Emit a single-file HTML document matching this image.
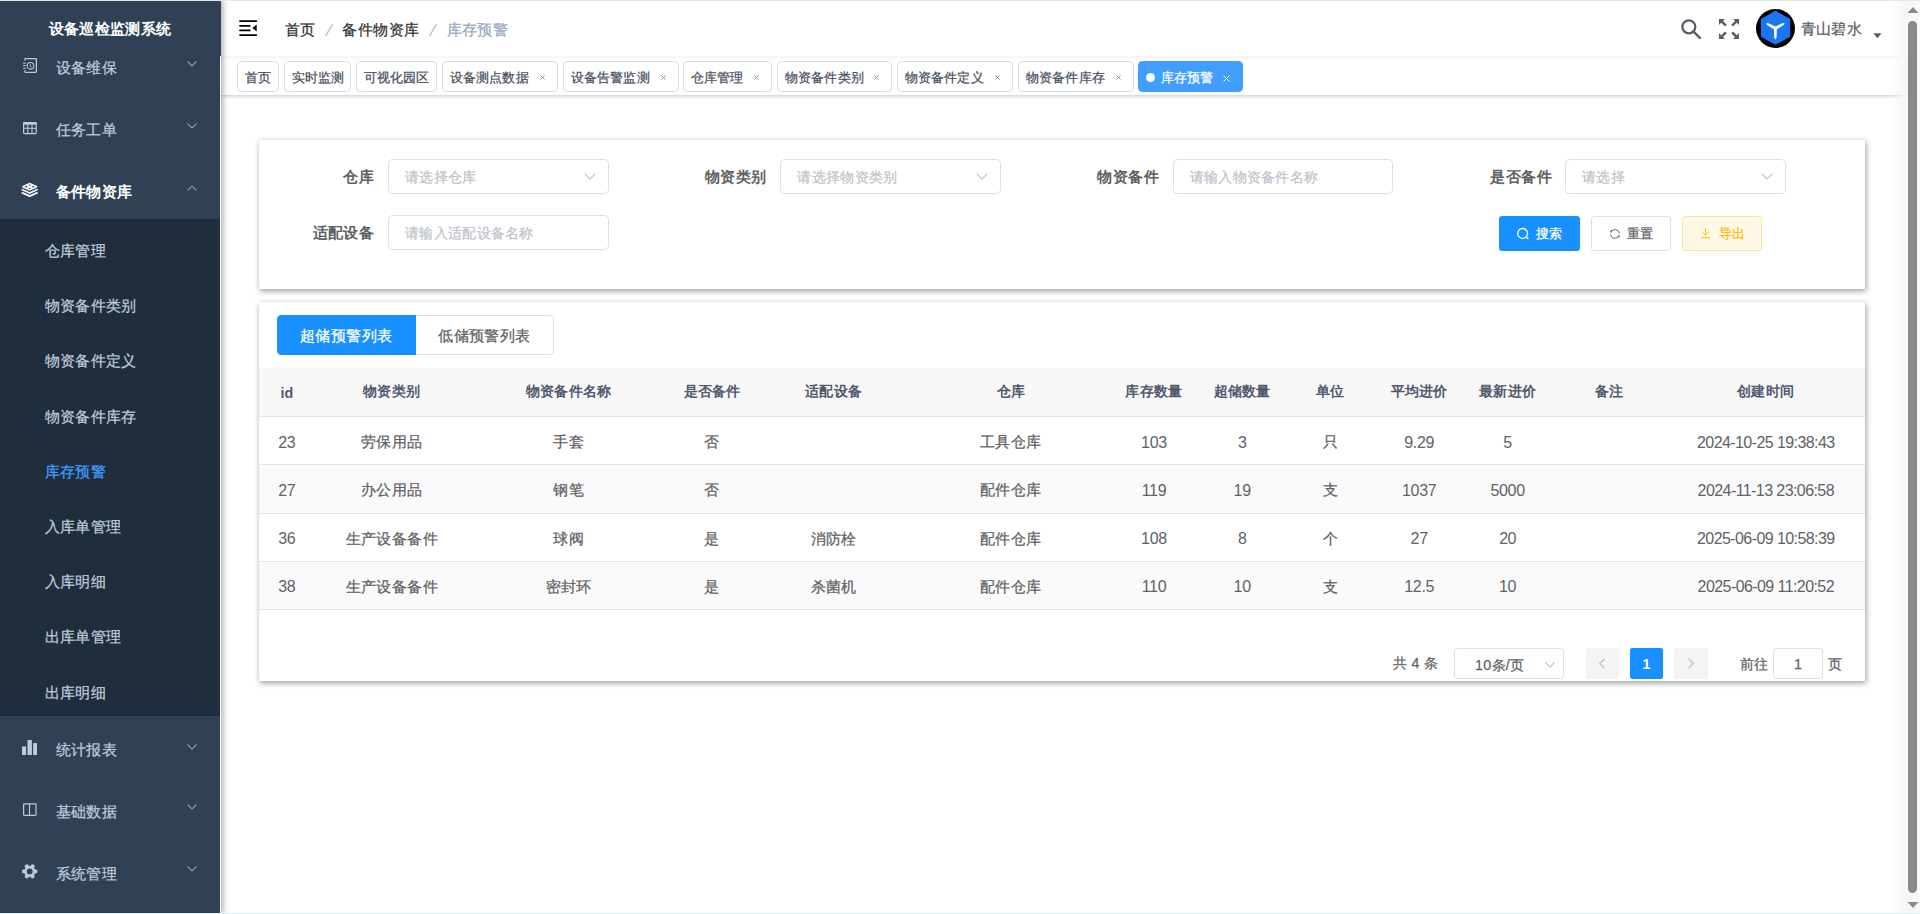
<!DOCTYPE html><html><head><meta charset="utf-8"><style>
*{box-sizing:border-box;margin:0;padding:0}
html,body{width:1920px;height:914px;overflow:hidden;background:#fff;font-family:"Liberation Sans",sans-serif;color:#606266}
.t{position:absolute;white-space:nowrap;line-height:1;-webkit-text-stroke:0.25px}
.a{position:absolute}
.f15{font-size:15.4px;letter-spacing:.4px}
.f14{font-size:14.3px;letter-spacing:.3px}
.f13{font-size:13.2px;letter-spacing:.2px}
#sidebar{position:absolute;left:0;top:0;width:221px;height:914px;background:#304156;overflow:hidden;z-index:5;box-shadow:2px 0 6px rgba(0,21,41,.35)}
.mi{color:#bfcbd9}
#navbar{position:absolute;left:221px;top:0;width:1683px;height:56px;background:#fff;box-shadow:0 1px 4px rgba(0,21,41,.08);z-index:2}
#tags{position:absolute;left:221px;top:56px;width:1683px;height:40px;background:#fff;border-bottom:1px solid #d8dce5;box-shadow:0 1px 3px 0 rgba(0,0,0,.12),0 0 3px 0 rgba(0,0,0,.04);z-index:1}
.tag{position:absolute;top:61.1px;height:30.6px;border:1px solid #d8dce5;border-radius:4.4px;background:#fff;z-index:3}
.card{position:absolute;left:258.5px;width:1606.6px;background:#fff;box-shadow:0.5px 1.5px 6px rgba(0,0,0,.4)}
.lbl{font-weight:bold;color:#606266;-webkit-text-stroke:0}
.inp{position:absolute;width:220.6px;height:34.8px;border:1px solid #dcdfe6;border-radius:4.4px;background:#fff}
.ph{color:#c0c4cc}
.btn{position:absolute;top:215.9px;height:34.7px;border-radius:3.3px}
.hl{position:absolute;left:258.5px;width:1606.6px;height:1px;background:#dfe6ec}
.c{position:absolute;width:300px;text-align:center;white-space:nowrap;line-height:1;-webkit-text-stroke:0.25px}
.bd{color:#606266}
.hd{color:#515a6e;font-weight:bold;-webkit-text-stroke:0}
</style></head><body>
<div id="sidebar">
<div class="a" style="left:0;top:218.8px;width:220px;height:496.9px;background:#1f2d3d"></div>
<div class="a" style="left:220px;top:56px;width:1px;height:858px;background:#fff"></div>
<div class="t f15" style="left:48.5px;top:20.7px;font-weight:bold;color:#fff;letter-spacing:.4px;-webkit-text-stroke:0">设备巡检监测系统</div>
<div class="t f15" style="left:55.5px;top:60.0px;color:#bfcbd9">设备维保</div>
<svg class="a" style="left:186.7px;top:60.5px" width="10" height="6" viewBox="0 0 10 6"><path d="M0.5 0.5 L5 5 L9.5 0.5" fill="none" stroke="#8f9aa8" stroke-width="1.1"/></svg>
<div class="t f15" style="left:55.5px;top:121.7px;color:#bfcbd9">任务工单</div>
<svg class="a" style="left:186.7px;top:122.7px" width="10" height="6" viewBox="0 0 10 6"><path d="M0.5 0.5 L5 5 L9.5 0.5" fill="none" stroke="#8f9aa8" stroke-width="1.1"/></svg>
<div class="t f15" style="left:55.5px;top:183.6px;color:#fff;font-weight:bold;-webkit-text-stroke:0">备件物资库</div>
<svg class="a" style="left:186.7px;top:184.7px" width="10" height="6" viewBox="0 0 10 6"><path d="M0.5 5.5 L5 1 L9.5 5.5" fill="none" stroke="#8f9aa8" stroke-width="1.1"/></svg>
<div class="t f15" style="left:55.5px;top:742.1px;color:#bfcbd9">统计报表</div>
<svg class="a" style="left:186.7px;top:743.5px" width="10" height="6" viewBox="0 0 10 6"><path d="M0.5 0.5 L5 5 L9.5 0.5" fill="none" stroke="#8f9aa8" stroke-width="1.1"/></svg>
<div class="t f15" style="left:55.5px;top:804.1px;color:#bfcbd9">基础数据</div>
<svg class="a" style="left:186.7px;top:804.4px" width="10" height="6" viewBox="0 0 10 6"><path d="M0.5 0.5 L5 5 L9.5 0.5" fill="none" stroke="#8f9aa8" stroke-width="1.1"/></svg>
<div class="t f15" style="left:55.5px;top:866.1px;color:#bfcbd9">系统管理</div>
<svg class="a" style="left:186.7px;top:866.4px" width="10" height="6" viewBox="0 0 10 6"><path d="M0.5 0.5 L5 5 L9.5 0.5" fill="none" stroke="#8f9aa8" stroke-width="1.1"/></svg>
<div class="t f15" style="left:44.5px;top:243.0px;color:#bfcbd9">仓库管理</div>
<div class="t f15" style="left:44.5px;top:298.2px;color:#bfcbd9">物资备件类别</div>
<div class="t f15" style="left:44.5px;top:353.4px;color:#bfcbd9">物资备件定义</div>
<div class="t f15" style="left:44.5px;top:408.6px;color:#bfcbd9">物资备件库存</div>
<div class="t f15" style="left:44.5px;top:463.8px;color:#409eff">库存预警</div>
<div class="t f15" style="left:44.5px;top:519.0px;color:#bfcbd9">入库单管理</div>
<div class="t f15" style="left:44.5px;top:574.2px;color:#bfcbd9">入库明细</div>
<div class="t f15" style="left:44.5px;top:629.4px;color:#bfcbd9">出库单管理</div>
<div class="t f15" style="left:44.5px;top:684.6px;color:#bfcbd9">出库明细</div>
<svg class="a" style="left:22px;top:56px" width="18" height="20" viewBox="0 0 18 20">
<path d="M2.9 4.6 V3.0 Q2.9 2.5 3.4 2.5 H13.9 Q14.4 2.5 14.4 3.0 V15.8 Q14.4 16.3 13.9 16.3 H3.4 Q2.9 16.3 2.9 15.8 V14.2" fill="none" stroke="#bfcbd9" stroke-width="1.25"/>
<path d="M1.1 7.2 H3.9 M1.1 9.6 H3.9 M1.1 12.3 H3.9" stroke="#bfcbd9" stroke-width="1"/>
<circle cx="8.5" cy="9.8" r="3.3" fill="none" stroke="#bfcbd9" stroke-width="1.1"/>
<path d="M8.3 8.2 V10.1 L9.6 11" fill="none" stroke="#bfcbd9" stroke-width="0.9"/>
</svg>
<svg class="a" style="left:22px;top:121px" width="16" height="14" viewBox="0 0 16 14">
<rect x="1.6" y="1.6" width="12.6" height="11" rx="0.8" fill="none" stroke="#bfcbd9" stroke-width="1.2"/>
<rect x="1.2" y="1.1" width="13.4" height="2.6" fill="#bfcbd9"/>
<path d="M1.6 7.3 H14.2 M5.8 3.5 V12.6 M10 3.5 V12.6" stroke="#bfcbd9" stroke-width="1.1"/>
</svg>
<svg class="a" style="left:21px;top:181px" width="18" height="18" viewBox="0 0 18 18">
<path d="M1 5.8 Q1 5.2 1.8 4.8 L8 1.9 Q8.7 1.6 9.4 1.9 L15.6 4.8 Q16.4 5.2 16.4 5.8 Q16.4 6.4 15.6 6.8 L9.4 9.4 Q8.7 9.7 8 9.4 L1.8 6.8 Q1 6.4 1 5.8 Z" fill="#f4f4f5"/>
<path d="M1.4 8.7 L8.7 12 L16 8.7" fill="none" stroke="#f4f4f5" stroke-width="1.8" stroke-linejoin="round" stroke-linecap="round"/>
<path d="M1.4 11.9 L8.7 15.1 L16 11.9" fill="none" stroke="#f4f4f5" stroke-width="1.8" stroke-linejoin="round" stroke-linecap="round"/>
<ellipse cx="5.2" cy="5.8" rx="1.1" ry="0.7" fill="#304156"/><ellipse cx="12.2" cy="5.8" rx="1.1" ry="0.7" fill="#304156"/><ellipse cx="8.7" cy="3.9" rx="0.9" ry="0.5" fill="#304156"/><ellipse cx="8.7" cy="7.6" rx="0.9" ry="0.5" fill="#304156"/>
</svg>
<svg class="a" style="left:21px;top:739px" width="18" height="17" viewBox="0 0 18 17">
<rect x="1" y="7.4" width="4.1" height="8.6" fill="#bfcbd9"/><rect x="6.5" y="1" width="4.4" height="15" fill="#bfcbd9"/><rect x="12.1" y="4.1" width="3.9" height="11.9" fill="#bfcbd9"/>
</svg>
<svg class="a" style="left:22px;top:802px" width="16" height="15" viewBox="0 0 16 15">
<rect x="1.6" y="1.9" width="12.4" height="11.4" rx="0.8" fill="none" stroke="#bfcbd9" stroke-width="1.2"/>
<path d="M7.5 1.9 V13.3" stroke="#bfcbd9" stroke-width="1.2"/>
</svg>
<svg class="a" style="left:22px;top:864px" width="16" height="16" viewBox="0 0 16 16">
<g transform="translate(7.7 7.4)"><circle r="5.6" fill="#bfcbd9"/><rect x="-1.9" y="-7.6" width="3.8" height="3.6" rx="1" transform="rotate(30)" fill="#bfcbd9"/><rect x="-1.9" y="-7.6" width="3.8" height="3.6" rx="1" transform="rotate(90)" fill="#bfcbd9"/><rect x="-1.9" y="-7.6" width="3.8" height="3.6" rx="1" transform="rotate(150)" fill="#bfcbd9"/><rect x="-1.9" y="-7.6" width="3.8" height="3.6" rx="1" transform="rotate(210)" fill="#bfcbd9"/><rect x="-1.9" y="-7.6" width="3.8" height="3.6" rx="1" transform="rotate(270)" fill="#bfcbd9"/><rect x="-1.9" y="-7.6" width="3.8" height="3.6" rx="1" transform="rotate(330)" fill="#bfcbd9"/><circle r="2.9" fill="#304156"/></g>
</svg>
</div>
<div id="navbar"></div>
<div class="a" style="left:0;top:0;width:1920px;height:1px;background:#e6e8e3;z-index:9"></div>
<svg class="a" style="left:238px;top:19px;z-index:3" width="20" height="18" viewBox="0 0 20 18">
<path d="M2 2.2 H18.3 M2 16.1 H18.3 M2 6.8 H11.8 M2 11.4 H11.8" stroke="#000" stroke-width="1.7" stroke-linecap="round"/>
<path d="M18.7 5.5 L14.3 9 L18.7 12.4 Z" fill="#000"/>
</svg>
<div class="t f15" style="left:285px;top:21.7px;color:#303133;z-index:3">首页</div>
<svg class="a" style="left:324px;top:23px;z-index:3" width="10" height="14" viewBox="0 0 10 14"><path d="M1.7 12.8 L8.6 1.1" stroke="#c0c4cc" stroke-width="1.5"/></svg>
<div class="t f15" style="left:342.4px;top:21.7px;color:#303133;z-index:3">备件物资库</div>
<svg class="a" style="left:428px;top:23px;z-index:3" width="10" height="14" viewBox="0 0 10 14"><path d="M1.6 12.8 L8.5 1.1" stroke="#c0c4cc" stroke-width="1.5"/></svg>
<div class="t f15" style="left:446.5px;top:21.7px;color:#97a8be;z-index:3">库存预警</div>
<svg class="a" style="left:1679px;top:17px;z-index:3" width="24" height="24" viewBox="0 0 24 24">
<circle cx="9.8" cy="9.8" r="6.5" fill="none" stroke="#5a5e66" stroke-width="2.3"/>
<path d="M14.6 14.6 L20.8 20.8" stroke="#5a5e66" stroke-width="2.5" stroke-linecap="round"/>
</svg>
<svg class="a" style="left:1718px;top:18px;z-index:3" width="22" height="22" viewBox="0 0 22 22">
<g fill="#5a5e66">
<path d="M1 1 H7 L5 3 L8.8 6.8 L7 8.6 L3.2 4.8 L1 7 Z"/>
<path d="M21 1 H15 L17 3 L13.2 6.8 L15 8.6 L18.8 4.8 L21 7 Z"/>
<path d="M1 21 H7 L5 19 L8.8 15.2 L7 13.4 L3.2 17.2 L1 15 Z"/>
<path d="M21 21 H15 L17 19 L13.2 15.2 L15 13.4 L18.8 17.2 L21 15 Z"/>
</g></svg>
<svg class="a" style="left:1755px;top:8px;z-index:3" width="41" height="41" viewBox="0 0 41 41">
<circle cx="20.5" cy="20.4" r="19.5" fill="#000"/>
<path d="M20.4 2.8 L35.2 11 V28.8 L20.4 36.8 L5.9 28.8 V11 Z" fill="#1b76f5"/>
<path transform="translate(0 0.8)" d="M11.2 14.6 Q12.4 13.9 14 14.6 L20.4 17.6 L26.8 14.6 Q28.4 13.9 29.6 14.6 Q29.2 15.9 27.8 16.8 L21.8 20.6 L21.6 28.6 L20.4 31 L19.2 28.6 L19 20.6 L13 16.8 Q11.6 15.9 11.2 14.6 Z" fill="#fff"/>
</svg>
<div class="t f15" style="left:1800.5px;top:21.3px;color:#5a5e66;z-index:3">青山碧水</div>
<svg class="a" style="left:1873px;top:33px;z-index:3" width="9" height="6" viewBox="0 0 9 6"><path d="M0.3 0.3 H8.5 L4.4 5.3 Z" fill="#5a5e66"/></svg>
<div id="tags"></div>
<div class="tag" style="left:237.3px;width:41.3px"></div>
<div class="t f13" style="left:244.8px;top:70.5px;color:#495060;z-index:4">首页</div>
<div class="tag" style="left:284.2px;width:67.3px"></div>
<div class="t f13" style="left:291.7px;top:70.5px;color:#495060;z-index:4">实时监测</div>
<div class="tag" style="left:356.2px;width:81.3px"></div>
<div class="t f13" style="left:363.7px;top:70.5px;color:#495060;z-index:4">可视化园区</div>
<div class="tag" style="left:442.1px;width:115.7px"></div>
<div class="t f13" style="left:449.6px;top:70.5px;color:#495060;z-index:4">设备测点数据</div>
<svg class="a" style="left:539.7px;top:75.4px;z-index:4" width="5" height="5" viewBox="0 0 5 5"><path d="M0.5 0.5 L4.5 4.5 M4.5 0.5 L0.5 4.5" stroke="#8d9199" stroke-width="1"/></svg>
<div class="tag" style="left:563.2px;width:115.4px"></div>
<div class="t f13" style="left:570.7px;top:70.5px;color:#495060;z-index:4">设备告警监测</div>
<svg class="a" style="left:660.5px;top:75.4px;z-index:4" width="5" height="5" viewBox="0 0 5 5"><path d="M0.5 0.5 L4.5 4.5 M4.5 0.5 L0.5 4.5" stroke="#8d9199" stroke-width="1"/></svg>
<div class="tag" style="left:683.2px;width:89.3px"></div>
<div class="t f13" style="left:690.7px;top:70.5px;color:#495060;z-index:4">仓库管理</div>
<svg class="a" style="left:754.4px;top:75.4px;z-index:4" width="5" height="5" viewBox="0 0 5 5"><path d="M0.5 0.5 L4.5 4.5 M4.5 0.5 L0.5 4.5" stroke="#8d9199" stroke-width="1"/></svg>
<div class="tag" style="left:777.4px;width:114.9px"></div>
<div class="t f13" style="left:784.9px;top:70.5px;color:#495060;z-index:4">物资备件类别</div>
<svg class="a" style="left:874.2px;top:75.4px;z-index:4" width="5" height="5" viewBox="0 0 5 5"><path d="M0.5 0.5 L4.5 4.5 M4.5 0.5 L0.5 4.5" stroke="#8d9199" stroke-width="1"/></svg>
<div class="tag" style="left:897.2px;width:115.4px"></div>
<div class="t f13" style="left:904.7px;top:70.5px;color:#495060;z-index:4">物资备件定义</div>
<svg class="a" style="left:994.5px;top:75.4px;z-index:4" width="5" height="5" viewBox="0 0 5 5"><path d="M0.5 0.5 L4.5 4.5 M4.5 0.5 L0.5 4.5" stroke="#8d9199" stroke-width="1"/></svg>
<div class="tag" style="left:1018.3px;width:115.4px"></div>
<div class="t f13" style="left:1025.8px;top:70.5px;color:#495060;z-index:4">物资备件库存</div>
<svg class="a" style="left:1115.6px;top:75.4px;z-index:4" width="5" height="5" viewBox="0 0 5 5"><path d="M0.5 0.5 L4.5 4.5 M4.5 0.5 L0.5 4.5" stroke="#8d9199" stroke-width="1"/></svg>
<div class="tag" style="left:1138.1px;width:104.7px;background:#409eff;border-color:#409eff"></div>
<div class="a" style="left:1146px;top:73.1px;width:9px;height:9px;border-radius:50%;background:#fff;z-index:4"></div>
<div class="t f13" style="left:1160.5px;top:70.5px;color:#fff;z-index:4">库存预警</div>
<svg class="a" style="left:1223.1px;top:75.1px;z-index:4" width="7" height="7" viewBox="0 0 7 7"><path d="M0.5 0.5 L6.5 6.5 M6.5 0.5 L0.5 6.5" stroke="#fff" stroke-width="1"/></svg>
<div class="card" style="top:139.7px;height:149.2px"></div>
<div class="t f15 lbl" style="right:1546.0px;top:168.9px;letter-spacing:.4px">仓库</div>
<div class="t f15 lbl" style="right:1153.5px;top:168.9px;letter-spacing:.4px">物资类别</div>
<div class="t f15 lbl" style="right:761.0px;top:168.9px;letter-spacing:.4px">物资备件</div>
<div class="t f15 lbl" style="right:368.0px;top:168.9px;letter-spacing:.4px">是否备件</div>
<div class="t f15 lbl" style="right:1545.8px;top:225.2px;letter-spacing:.4px">适配设备</div>
<div class="inp" style="left:388.1px;top:159px"></div>
<div class="t f14 ph" style="left:405.1px;top:169.5px">请选择仓库</div>
<svg class="a" style="left:584.1px;top:172.5px" width="12" height="7" viewBox="0 0 12 7"><path d="M0.6 0.6 L6 6 L11.4 0.6" fill="none" stroke="#c0c4cc" stroke-width="1.2"/></svg>
<div class="inp" style="left:780.4px;top:159px"></div>
<div class="t f14 ph" style="left:797.4px;top:169.5px">请选择物资类别</div>
<svg class="a" style="left:976.4px;top:172.5px" width="12" height="7" viewBox="0 0 12 7"><path d="M0.6 0.6 L6 6 L11.4 0.6" fill="none" stroke="#c0c4cc" stroke-width="1.2"/></svg>
<div class="inp" style="left:1172.7px;top:159px"></div>
<div class="t f14 ph" style="left:1189.7px;top:169.5px">请输入物资备件名称</div>
<div class="inp" style="left:1565px;top:159px"></div>
<div class="t f14 ph" style="left:1582.0px;top:169.5px">请选择</div>
<svg class="a" style="left:1761.0px;top:172.5px" width="12" height="7" viewBox="0 0 12 7"><path d="M0.6 0.6 L6 6 L11.4 0.6" fill="none" stroke="#c0c4cc" stroke-width="1.2"/></svg>
<div class="inp" style="left:388.1px;top:215px"></div>
<div class="t f14 ph" style="left:405.1px;top:225.5px">请输入适配设备名称</div>
<div class="btn" style="left:1499px;width:80.7px;background:#1890ff"></div>
<svg class="a" style="left:1516px;top:227px" width="14" height="13" viewBox="0 0 14 13"><circle cx="6.6" cy="6.4" r="4.9" fill="none" stroke="#fff" stroke-width="1.3"/><path d="M10.2 9.9 L12.4 12" stroke="#fff" stroke-width="1.3"/></svg>
<div class="t f13" style="left:1535.5px;top:226.5px;color:#fff">搜索</div>
<div class="btn" style="left:1591.4px;width:79.4px;background:#fff;border:1px solid #dcdfe6"></div>
<svg class="a" style="left:1609px;top:227.5px" width="12" height="12" viewBox="0 0 12 12"><path d="M1.9 4.3 A4.5 4.5 0 0 1 10.5 5.6" fill="none" stroke="#606266" stroke-width="0.95"/><path d="M10.1 7.6 A4.5 4.5 0 0 1 1.5 6.3" fill="none" stroke="#606266" stroke-width="0.95"/><path d="M0.9 2.6 L3.6 2.6 L2.1 5 Z" fill="#606266"/><path d="M11.1 9.3 L8.4 9.3 L9.9 6.9 Z" fill="#606266"/></svg>
<div class="t f13" style="left:1627.3px;top:226.5px;color:#606266">重置</div>
<div class="btn" style="left:1682.2px;width:79.8px;background:#fff8e6;border:1px solid #ffe399"></div>
<svg class="a" style="left:1700px;top:227px" width="12" height="12" viewBox="0 0 12 12"><path d="M5.5 1 V8.2 M2.3 5 L5.5 8.2 L8.7 5 M0.9 10.6 H10.2" fill="none" stroke="#ffba00" stroke-width="0.95"/></svg>
<div class="t f13" style="left:1718.5px;top:226.5px;color:#ffba00">导出</div>
<div class="card" style="top:301.7px;height:379.1px"></div>
<div class="a" style="left:277px;top:314.9px;width:276.7px;height:39.7px;border:1px solid #dcdfe6;border-radius:4.4px;background:#fff"></div>
<div class="a" style="left:277px;top:314.9px;width:139px;height:39.7px;border-radius:4.4px 0 0 4.4px;background:#1890ff"></div>
<div class="t f15" style="left:300px;top:327.7px;color:#fff">超储预警列表</div>
<div class="t f15" style="left:438.3px;top:327.7px;color:#606266">低储预警列表</div>
<div class="a" style="left:258.5px;top:367.8px;width:1606.6px;height:48.4px;background:#f8f8f9"></div>
<div class="hl" style="top:416.2px"></div>
<div class="hl" style="top:464.4px"></div>
<div class="hl" style="top:512.9px"></div>
<div class="hl" style="top:561.2px"></div>
<div class="hl" style="top:609.4px"></div>
<div class="a" style="left:258.5px;top:465.4px;width:1606.6px;height:47.5px;background:#fafafa"></div>
<div class="a" style="left:258.5px;top:562.2px;width:1606.6px;height:47.2px;background:#fafafa"></div>
<div class="c hd " style="left:136.8px;top:385.9px;font-size:14.3px">id</div>
<div class="c hd f14" style="left:241.8px;top:384.4px;font-size:14.3px">物资类别</div>
<div class="c hd f14" style="left:418.7px;top:384.4px;font-size:14.3px">物资备件名称</div>
<div class="c hd f14" style="left:562.2px;top:384.4px;font-size:14.3px">是否备件</div>
<div class="c hd f14" style="left:683.8px;top:384.4px;font-size:14.3px">适配设备</div>
<div class="c hd f14" style="left:860.9px;top:384.4px;font-size:14.3px">仓库</div>
<div class="c hd f14" style="left:1004.0px;top:384.4px;font-size:14.3px">库存数量</div>
<div class="c hd f14" style="left:1092.2px;top:384.4px;font-size:14.3px">超储数量</div>
<div class="c hd f14" style="left:1180.5px;top:384.4px;font-size:14.3px">单位</div>
<div class="c hd f14" style="left:1269.2px;top:384.4px;font-size:14.3px">平均进价</div>
<div class="c hd f14" style="left:1357.6px;top:384.4px;font-size:14.3px">最新进价</div>
<div class="c hd f14" style="left:1459.2px;top:384.4px;font-size:14.3px">备注</div>
<div class="c hd f14" style="left:1615.8px;top:384.4px;font-size:14.3px">创建时间</div>
<div class="c bd" style="left:136.8px;top:434.5px;font-size:16px;-webkit-text-stroke:0;letter-spacing:-.3px">23</div>
<div class="c bd" style="left:241.8px;top:434.0px;font-size:15.4px;letter-spacing:.4px">劳保用品</div>
<div class="c bd" style="left:418.7px;top:434.0px;font-size:15.4px;letter-spacing:.4px">手套</div>
<div class="c bd" style="left:562.2px;top:434.0px;font-size:15.4px;letter-spacing:.4px">否</div>
<div class="c bd" style="left:860.9px;top:434.0px;font-size:15.4px;letter-spacing:.4px">工具仓库</div>
<div class="c bd" style="left:1004.0px;top:434.5px;font-size:16px;-webkit-text-stroke:0;letter-spacing:-.3px">103</div>
<div class="c bd" style="left:1092.2px;top:434.5px;font-size:16px;-webkit-text-stroke:0;letter-spacing:-.3px">3</div>
<div class="c bd" style="left:1180.5px;top:434.0px;font-size:15.4px;letter-spacing:.4px">只</div>
<div class="c bd" style="left:1269.2px;top:434.5px;font-size:16px;-webkit-text-stroke:0;letter-spacing:-.3px">9.29</div>
<div class="c bd" style="left:1357.6px;top:434.5px;font-size:16px;-webkit-text-stroke:0;letter-spacing:-.3px">5</div>
<div class="c bd" style="left:1615.8px;top:434.5px;font-size:16px;-webkit-text-stroke:0;letter-spacing:-.3px;letter-spacing:-.58px">2024-10-25 19:38:43</div>
<div class="c bd" style="left:136.8px;top:482.6px;font-size:16px;-webkit-text-stroke:0;letter-spacing:-.3px">27</div>
<div class="c bd" style="left:241.8px;top:482.1px;font-size:15.4px;letter-spacing:.4px">办公用品</div>
<div class="c bd" style="left:418.7px;top:482.1px;font-size:15.4px;letter-spacing:.4px">钢笔</div>
<div class="c bd" style="left:562.2px;top:482.1px;font-size:15.4px;letter-spacing:.4px">否</div>
<div class="c bd" style="left:860.9px;top:482.1px;font-size:15.4px;letter-spacing:.4px">配件仓库</div>
<div class="c bd" style="left:1004.0px;top:482.6px;font-size:16px;-webkit-text-stroke:0;letter-spacing:-.3px">119</div>
<div class="c bd" style="left:1092.2px;top:482.6px;font-size:16px;-webkit-text-stroke:0;letter-spacing:-.3px">19</div>
<div class="c bd" style="left:1180.5px;top:482.1px;font-size:15.4px;letter-spacing:.4px">支</div>
<div class="c bd" style="left:1269.2px;top:482.6px;font-size:16px;-webkit-text-stroke:0;letter-spacing:-.3px">1037</div>
<div class="c bd" style="left:1357.6px;top:482.6px;font-size:16px;-webkit-text-stroke:0;letter-spacing:-.3px">5000</div>
<div class="c bd" style="left:1615.8px;top:482.6px;font-size:16px;-webkit-text-stroke:0;letter-spacing:-.3px;letter-spacing:-.58px">2024-11-13 23:06:58</div>
<div class="c bd" style="left:136.8px;top:531.0px;font-size:16px;-webkit-text-stroke:0;letter-spacing:-.3px">36</div>
<div class="c bd" style="left:241.8px;top:530.5px;font-size:15.4px;letter-spacing:.4px">生产设备备件</div>
<div class="c bd" style="left:418.7px;top:530.5px;font-size:15.4px;letter-spacing:.4px">球阀</div>
<div class="c bd" style="left:562.2px;top:530.5px;font-size:15.4px;letter-spacing:.4px">是</div>
<div class="c bd" style="left:683.8px;top:530.5px;font-size:15.4px;letter-spacing:.4px">消防栓</div>
<div class="c bd" style="left:860.9px;top:530.5px;font-size:15.4px;letter-spacing:.4px">配件仓库</div>
<div class="c bd" style="left:1004.0px;top:531.0px;font-size:16px;-webkit-text-stroke:0;letter-spacing:-.3px">108</div>
<div class="c bd" style="left:1092.2px;top:531.0px;font-size:16px;-webkit-text-stroke:0;letter-spacing:-.3px">8</div>
<div class="c bd" style="left:1180.5px;top:530.5px;font-size:15.4px;letter-spacing:.4px">个</div>
<div class="c bd" style="left:1269.2px;top:531.0px;font-size:16px;-webkit-text-stroke:0;letter-spacing:-.3px">27</div>
<div class="c bd" style="left:1357.6px;top:531.0px;font-size:16px;-webkit-text-stroke:0;letter-spacing:-.3px;letter-spacing:-.58px">20</div>
<div class="c bd" style="left:1615.8px;top:531.0px;font-size:16px;-webkit-text-stroke:0;letter-spacing:-.3px;letter-spacing:-.58px">2025-06-09 10:58:39</div>
<div class="c bd" style="left:136.8px;top:579.3px;font-size:16px;-webkit-text-stroke:0;letter-spacing:-.3px">38</div>
<div class="c bd" style="left:241.8px;top:578.8px;font-size:15.4px;letter-spacing:.4px">生产设备备件</div>
<div class="c bd" style="left:418.7px;top:578.8px;font-size:15.4px;letter-spacing:.4px">密封环</div>
<div class="c bd" style="left:562.2px;top:578.8px;font-size:15.4px;letter-spacing:.4px">是</div>
<div class="c bd" style="left:683.8px;top:578.8px;font-size:15.4px;letter-spacing:.4px">杀菌机</div>
<div class="c bd" style="left:860.9px;top:578.8px;font-size:15.4px;letter-spacing:.4px">配件仓库</div>
<div class="c bd" style="left:1004.0px;top:579.3px;font-size:16px;-webkit-text-stroke:0;letter-spacing:-.3px">110</div>
<div class="c bd" style="left:1092.2px;top:579.3px;font-size:16px;-webkit-text-stroke:0;letter-spacing:-.3px">10</div>
<div class="c bd" style="left:1180.5px;top:578.8px;font-size:15.4px;letter-spacing:.4px">支</div>
<div class="c bd" style="left:1269.2px;top:579.3px;font-size:16px;-webkit-text-stroke:0;letter-spacing:-.3px">12.5</div>
<div class="c bd" style="left:1357.6px;top:579.3px;font-size:16px;-webkit-text-stroke:0;letter-spacing:-.3px">10</div>
<div class="c bd" style="left:1615.8px;top:579.3px;font-size:16px;-webkit-text-stroke:0;letter-spacing:-.3px;letter-spacing:-.58px">2025-06-09 11:20:52</div>
<div class="t f14" style="left:1393px;top:655.9px;color:#606266">共 4 条</div>
<div class="a" style="left:1454.4px;top:648.2px;width:109.5px;height:30.6px;border:1px solid #dcdfe6;border-radius:3.3px"></div>
<div class="t f14" style="left:1475px;top:657.9px;color:#606266">10条/页</div>
<svg class="a" style="left:1545px;top:661.5px" width="10" height="6" viewBox="0 0 10 6"><path d="M0.5 0.5 L5 5 L9.5 0.5" fill="none" stroke="#c0c4cc" stroke-width="1.1"/></svg>
<div class="a" style="left:1586.2px;top:648.2px;width:33px;height:30.6px;background:#f4f4f5;border-radius:2.2px"></div>
<svg class="a" style="left:1598px;top:658px" width="8" height="11" viewBox="0 0 8 11"><path d="M6.5 0.8 L1.8 5.5 L6.5 10.2" fill="none" stroke="#c0c4cc" stroke-width="1.4"/></svg>
<div class="a" style="left:1630px;top:648.2px;width:32.8px;height:30.6px;background:#1890ff;border-radius:2.2px"></div>
<div class="t" style="left:1630px;width:32.8px;text-align:center;top:656.5px;color:#fff;font-weight:bold;font-size:14.3px;-webkit-text-stroke:0">1</div>
<div class="a" style="left:1674.2px;top:648.2px;width:33.8px;height:30.6px;background:#f4f4f5;border-radius:2.2px"></div>
<svg class="a" style="left:1687px;top:658px" width="8" height="11" viewBox="0 0 8 11"><path d="M1.5 0.8 L6.2 5.5 L1.5 10.2" fill="none" stroke="#c0c4cc" stroke-width="1.4"/></svg>
<div class="t f14" style="left:1739.5px;top:657.3px;color:#606266">前往</div>
<div class="a" style="left:1773.2px;top:648.2px;width:49.4px;height:30.6px;border:1px solid #dcdfe6;border-radius:3.3px"></div>
<div class="t" style="left:1773.6px;width:49px;text-align:center;top:657.3px;color:#606266;font-size:14.3px">1</div>
<div class="t f14" style="left:1828px;top:657.3px;color:#606266">页</div>
<div class="a" style="left:1890px;top:1px;width:30px;height:912px;background:linear-gradient(90deg,rgba(246,246,246,0) 0px,rgba(246,246,246,1) 17px,#f8f8f8 27px,#fcfcfc 30px);z-index:6"></div>
<div class="a" style="left:1908px;top:21px;width:9.2px;height:871.5px;border-radius:4.6px;background:#8a8a8a;z-index:7"></div>
<svg class="a" style="left:1906.5px;top:6px;z-index:7" width="12" height="8" viewBox="0 0 12 8"><path d="M0.5 7 L6 1 L11.5 7 Z" fill="#8a8a8a"/></svg>
<svg class="a" style="left:1906.5px;top:901px;z-index:7" width="12" height="8" viewBox="0 0 12 8"><path d="M0.5 1 L6 7 L11.5 1 Z" fill="#8a8a8a"/></svg>
<div class="a" style="left:0;top:913px;width:1920px;height:1px;background:#d9eff6;z-index:9"></div>
</body></html>
